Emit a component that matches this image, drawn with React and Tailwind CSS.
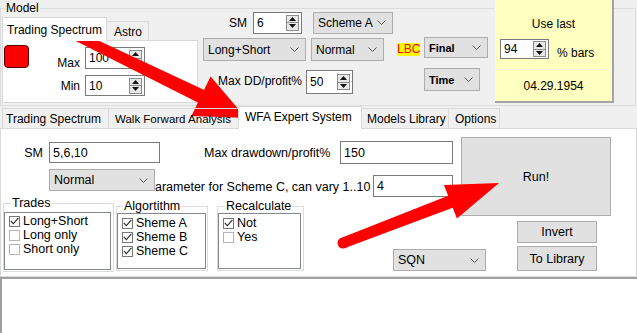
import React from 'react';

function Chevron() {
  return (
    <svg width="9" height="5" viewBox="0 0 9 5" className="shrink-0">
      <path d="M0.5 0.5L4.5 4.5L8.5 0.5" fill="none" stroke="#555" strokeWidth="1" />
    </svg>
  );
}

function Combo({ text, className = '', textClass = '' }) {
  return (
    <div className={`flex shrink-0 items-center justify-between bg-[#e1e1e1] border border-[#adadad] pl-[4px] pr-[6px] ${className}`}>
      <span className={textClass}>{text}</span>
      <Chevron />
    </div>
  );
}

function TextBox({ text, className = '' }) {
  return (
    <div className={`flex shrink-0 items-center bg-white border border-[#7a7a7a] pl-[3px] ${className}`}>
      {text}
    </div>
  );
}

function SpinButtons() {
  return (
    <div className="flex flex-col w-[13px] h-[16px] mr-[2px] border border-[#8c8c8c] bg-[#e8e8e8]">
      <div className="flex flex-1 items-center justify-center border-b border-[#8c8c8c]">
        <svg width="7" height="4" viewBox="0 0 7 4"><path d="M3.5 0L7 4H0Z" fill="#111" /></svg>
      </div>
      <div className="flex flex-1 items-center justify-center">
        <svg width="7" height="4" viewBox="0 0 7 4"><path d="M0 0H7L3.5 4Z" fill="#111" /></svg>
      </div>
    </div>
  );
}

function Spin({ text, className = '' }) {
  return (
    <div className={`flex shrink-0 items-center bg-white border border-[#7a7a7a] ${className}`}>
      <span className="flex-1 pl-[3px]">{text}</span>
      <SpinButtons />
    </div>
  );
}

function Check({ on, label }) {
  return (
    <div className="flex items-center h-[14px]">
      <span className={`flex items-center justify-center w-[11px] h-[11px] bg-white border ${on ? 'border-[#777]' : 'border-[#b5b5b5]'}`}>
        {on && (
          <svg width="9" height="8" viewBox="0 0 9 8">
            <path d="M0.8 3.8L3.4 6.6L8.4 0.9" fill="none" stroke="#333" strokeWidth="1.2" />
          </svg>
        )}
      </span>
      <span className="ml-[3px]">{label}</span>
    </div>
  );
}

function Arrow({ from, to, w0, w1, head, half }) {
  const [x0, y0] = from;
  const [x1, y1] = to;
  const len = Math.hypot(x1 - x0, y1 - y0);
  const ux = (x1 - x0) / len;
  const uy = (y1 - y0) / len;
  const nx = -uy;
  const ny = ux;
  const bx = x1 - ux * head;
  const by = y1 - uy * head;
  const p = (x, y) => `${x.toFixed(1)},${y.toFixed(1)}`;
  const shaft = [
    p(x0 + (nx * w0) / 2, y0 + (ny * w0) / 2),
    p(bx + ux * 2 + (nx * w1) / 2, by + uy * 2 + (ny * w1) / 2),
    p(bx + ux * 2 - (nx * w1) / 2, by + uy * 2 - (ny * w1) / 2),
    p(x0 - (nx * w0) / 2, y0 - (ny * w0) / 2),
  ].join(' ');
  const tri = [p(bx + nx * half, by + ny * half), p(x1, y1), p(bx - nx * half, by - ny * half)].join(' ');
  return (
    <g fill="#ff0000">
      <circle cx={x0} cy={y0} r={w0 / 2} />
      <polygon points={shaft} />
      <polygon points={tri} />
    </g>
  );
}

export default function App() {
  return (
    <div className="relative w-[637px] h-[333px] overflow-hidden bg-[#f0f0f0] text-[12px] leading-[14px] text-black font-['Liberation_Sans',Arial,sans-serif]">
      {/* Model group */}
      <fieldset className="mt-[2px] mr-[1px] h-[104px] min-w-0 border border-[#dcdcdc]">
        <legend className="ml-[4px] px-[1px] leading-[12px]">Model</legend>
        <div className="flex -mt-[14px]">
          {/* left tabs */}
          <div className="shrink-0 w-[199px] mt-[17px]">
            <div className="relative z-10 flex items-end h-[23px] pl-[1px]">
              <div className="h-[24px] w-[105px] -mb-[1px] bg-white border border-b-0 border-[#d9d9d9] pl-[4px] pt-[5px]">
                Trading Spectrum
              </div>
              <div className="h-[19px] w-[42px] border border-b-0 border-l-0 border-[#d9d9d9] pl-[7px] pt-[3px]">
                Astro
              </div>
            </div>
            <div className="flex ml-[1px] w-[196px] h-[63px] bg-white border border-[#d9d9d9]">
              <div className="ml-[1px] mt-[4px] w-[25px] h-[23px] rounded-[4px] bg-[#ff0000] border border-[#5a0000]" />
              <div className="flex flex-col">
                <div className="flex items-end mt-[6px]">
                  <span className="w-[51px] text-right -mb-[1px]">Max</span>
                  <Spin text="100" className="ml-[5px] w-[60px] h-[22px]" />
                </div>
                <div className="flex items-center mt-[6px]">
                  <span className="w-[51px] text-right">Min</span>
                  <Spin text="10" className="ml-[5px] w-[60px] h-[21px]" />
                </div>
              </div>
            </div>
          </div>

          {/* middle controls */}
          <div className="shrink-0 w-[295px]">
            <div className="flex items-center mt-[11px] h-[23px]">
              <span className="w-[47px] text-right">SM</span>
              <Spin text="6" className="ml-[6px] w-[49px] h-[22px]" />
              <Combo text="Scheme A" className="ml-[11px] w-[80px] h-[22px]" />
            </div>
            <div className="flex items-center mt-[4px] h-[23px]">
              <Combo text="Long+Short" className="ml-[3px] w-[103px] h-[23px]" />
              <Combo text="Normal" className="ml-[5px] w-[73px] h-[23px]" />
              <span className="shrink-0 ml-[13px] w-[23px] h-[13px] leading-[13px] bg-[#ffff00] text-[#ff0000] text-center">LBC</span>
              <Combo text="Final" textClass="text-[11px] font-bold" className="self-start -mt-[1px] ml-[4px] w-[64px] h-[21px]" />
            </div>
            <div className="flex items-start mt-[7px] h-[26px]">
              <span className="shrink-0 w-[102px] mt-[6px] text-right">Max DD/profit%</span>
              <Spin text="50" className="mt-[2px] ml-[4px] w-[47px] h-[24px]" />
              <Combo text="Time" textClass="text-[11px] font-bold" className="ml-[71px] w-[56px] h-[23px]" />
            </div>
          </div>

          {/* use last */}
          <div className="flex shrink-0 flex-col w-[119px] h-[103px] bg-[#ffffc0] border-r-2 border-b-2 border-[#a3a3a3]">
            <div className="mt-[17px] text-center">Use last</div>
            <div className="flex items-end mt-[8px]">
              <Spin text="94" className="ml-[5px] w-[49px] h-[20px]" />
              <span className="ml-[8px] -mb-[1px]">% bars</span>
            </div>
            <div className="flex flex-1 items-center justify-center mt-[10px] border-t border-[#f4f4dc]">
              04.29.1954
            </div>
          </div>
        </div>
      </fieldset>

      {/* lower tab control */}
      <div className="relative z-10 flex items-end h-[22px] pl-[2px]">
        <div className="shrink-0 h-[20px] w-[106px] border-l border-t border-[#d9d9d9] pl-[3px] pt-[3px]">Trading Spectrum</div>
        <div className="shrink-0 h-[20px] w-[130px] border-l border-t border-[#d9d9d9] pl-[6px] pt-[3px] text-[11.5px]">Walk Forward Analysis</div>
        <div className="shrink-0 h-[23px] w-[124px] -mb-[1px] bg-white border border-b-0 border-[#d9d9d9] pl-[6px] pt-[3px]">WFA Expert System</div>
        <div className="shrink-0 h-[20px] w-[86px] border-t border-[#d9d9d9] pl-[5px] pt-[3px]">Models Library</div>
        <div className="shrink-0 h-[20px] w-[52px] border-x border-t border-[#d9d9d9] pl-[6px] pt-[3px]">Options</div>
      </div>
      <div className="flex h-[149px] bg-white border border-[#d9d9d9] text-[12.5px]">
        <div className="shrink-0 w-[460px]">
          <div className="flex items-center mt-[12px] h-[23px]">
            <span className="shrink-0 w-[42px] text-right">SM</span>
            <TextBox text="5,6,10" className="ml-[6px] w-[111px] h-[21px]" />
            <span className="shrink-0 ml-[44px] w-[136px]">Max drawdown/profit%</span>
            <TextBox text="150" className="w-[113px] h-[23px]" />
          </div>
          <div className="flex items-start mt-[5px] h-[28px]">
            <Combo text="Normal" className="ml-[48px] w-[106px] h-[22px]" />
            <span className="shrink-0 mt-[11px] w-[218px] whitespace-nowrap overflow-hidden">arameter for Scheme C, can vary 1..10</span>
            <TextBox text="4" className="mt-[6px] w-[80px] h-[22px]" />
          </div>
          <div className="flex items-start">
            <fieldset className="shrink-0 ml-[2px] w-[111px] min-w-0 pb-[1px] border border-[#dcdcdc]">
              <legend className="ml-[7px] px-[1px] leading-[12px]">Trades</legend>
              <div className="mt-[3px] w-[107px] h-[58px] bg-white border border-[#828790] pl-[4px] pt-[1px]">
                <Check on label="Long+Short" />
                <Check label="Long only" />
                <Check label="Short only" />
              </div>
            </fieldset>
            <fieldset className="shrink-0 ml-[2px] mt-[3px] w-[92px] min-w-0 pb-[1px] border border-[#dcdcdc]">
              <legend className="ml-[6px] px-[1px] leading-[12px]">Algortithm</legend>
              <div className="mt-[1px] w-[89px] h-[56px] bg-white border border-[#828790] pl-[4px] pt-[2px]">
                <Check on label="Sheme A" />
                <Check on label="Sheme B" />
                <Check on label="Sheme C" />
              </div>
            </fieldset>
            <fieldset className="shrink-0 ml-[9px] mt-[3px] w-[87px] min-w-0 pb-[1px] border border-[#dcdcdc]">
              <legend className="ml-[7px] px-[1px] leading-[12px]">Recalculate</legend>
              <div className="mt-[1px] w-[83px] h-[56px] bg-white border border-[#828790] pl-[4px] pt-[2px]">
                <Check on label="Not" />
                <Check label="Yes" />
              </div>
            </fieldset>
            <Combo text="SQN" className="ml-[89px] mt-[52px] w-[93px] h-[22px]" />
          </div>
        </div>
        <div className="flex shrink-0 flex-col">
          <div className="flex items-center justify-center mt-[8px] w-[150px] h-[79px] bg-[#e1e1e1] border border-[#adadad]">
            Run!
          </div>
          <div className="flex items-center justify-center ml-[56px] mt-[5px] w-[80px] h-[22px] bg-[#e1e1e1] border border-[#adadad]">
            Invert
          </div>
          <div className="flex items-center justify-center ml-[56px] mt-[3px] w-[80px] h-[25px] bg-[#e1e1e1] border border-[#adadad]">
            To Library
          </div>
        </div>
      </div>

      {/* output box */}
      <div className="h-[56px] bg-white border-t-2 border-l-2 border-[#a0a0a0]" />

      {/* annotation arrows */}
      <svg className="absolute inset-0 pointer-events-none" width="637" height="333" viewBox="0 0 637 333">
        <Arrow from={[79, 37]} to={[246, 118]} w0={10} w1={14} head={50} half={22} />
        <Arrow from={[343, 243]} to={[499, 183]} w0={11} w1={13} head={52} half={18} />
      </svg>
    </div>
  );
}
